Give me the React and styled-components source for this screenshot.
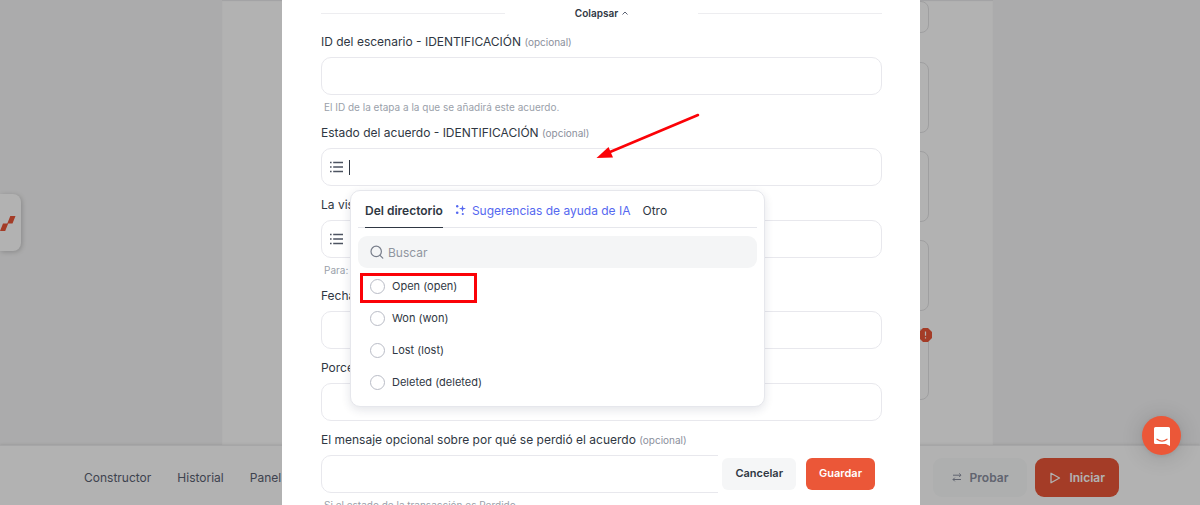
import { useState } from "react";
import styled, { createGlobalStyle, css } from "styled-components";

const GlobalStyle = createGlobalStyle`
  * {
    box-sizing: border-box;
  }

  body {
    margin: 0;
    overflow: hidden;
    font-family: Inter, "Liberation Sans", sans-serif;
    color: #2f3743;
  }

  button, input {
    font-family: inherit;
  }
`;

const Page = styled.div`
  display: flex;
  flex-direction: column;
  height: 100vh;
`;

const Canvas = styled.main`
  flex: 1;
  min-height: 0;
  display: grid;
  grid-template-columns: 21px 1fr;
  padding-right: 6px;
  overflow: hidden;
  background: #f5f5f6;
`;

const SideTab = styled.button`
  align-self: center;
  height: 57px;
  padding: 0;
  border: none;
  border-radius: 0 8px 8px 0;
  background: #fff;
  box-shadow: 1px 1px 5px rgba(0, 0, 0, .2);

  svg {
    display: block;
  }
`;

const Sheet = styled.section`
  justify-self: center;
  width: 100%;
  max-width: 771px;
  height: 100%;
  padding: 1px 64px 0;
  background: #fff;
  box-shadow: inset 0 1px 1px #e8e8ea;
`;

const Card = styled.div`
  position: relative;
  height: ${(props) => (props.$short ? "32px" : "71px")};
  margin-bottom: ${(props) => (props.$short ? "29px" : "18px")};
  border: 1px solid #e4e4e6;
  border-radius: 8px;
`;

const Alert = styled.svg`
  position: absolute;
  top: -2px;
  right: -4px;
`;

const BottomBar = styled.footer`
  height: 60px;
  display: flex;
  align-items: center;
  justify-content: space-between;
  padding: 4px 81px 0 84px;
  background: #fff;
  border-top: 1px solid #eeeef0;
  box-shadow: 0 0 3px rgba(0, 0, 0, .15);
`;

const Nav = styled.nav`
  display: flex;
  gap: 26px;

  a {
    color: #5a6172;
    font-size: 12px;
    line-height: 16px;
    text-decoration: none;
  }
`;

const Actions = styled.div`
  display: flex;
  gap: 8px;
`;

const BarButton = styled.button`
  display: flex;
  align-items: center;
  justify-content: center;
  gap: 8px;
  height: 39px;
  padding: 0 ${(props) => (props.$primary ? "14px" : "19px")};
  border: none;
  border-radius: 9px;
  font-size: 12px;
  font-weight: 600;
  background: ${(props) => (props.$primary ? "#eb5738" : "#f9fbfb")};
  color: ${(props) => (props.$primary ? "#fff" : "#8b90a0")};
`;

const Overlay = styled.div`
  position: fixed;
  inset: 0;
  display: flex;
  justify-content: center;
  background: rgba(0, 0, 0, .3);
`;

const Modal = styled.div`
  position: relative;
  width: 100%;
  max-width: 638px;
  padding: 5px 38px 0 39px;
  margin-left: 2px;
  overflow: hidden;
  background: #fff;
`;

const Collapse = styled.div`
  display: grid;
  grid-template-columns: 1fr auto 1fr;
  align-items: center;
  gap: 70px;
  margin-bottom: 13px;

  hr {
    width: 100%;
    margin: 0;
    border: none;
    border-top: 1px solid #ededf0;
  }

  button {
    display: flex;
    align-items: center;
    gap: 4px;
    padding: 0;
    border: none;
    background: none;
    color: #2f3743;
    font-size: 10px;
    font-weight: 600;
    line-height: 16px;
  }
`;

const Field = styled.div`
  position: relative;
  margin-bottom: 11px;
`;

const Label = styled.label`
  display: block;
  margin-bottom: 7px;
  font-size: 12px;
  line-height: 16px;
  white-space: nowrap;

  small {
    color: #8b909c;
    font-size: 10px;
    line-height: 12px;
  }
`;

const InputBox = styled.div`
  display: flex;
  align-items: center;
  height: 38px;
  padding: 0 8px;
  border: 1px solid #e8e8ed;
  border-radius: 10px;

  input {
    flex: 1;
    min-width: 0;
    border: none;
    outline: none;
    background: none;
    font-size: 12px;
  }
`;

const Caret = styled.span`
  width: 1px;
  height: 15px;
  margin-left: 6px;
  background: #2f3743;
`;

const Hint = styled.p`
  margin: 5px 0 0 3px;
  color: #9a9faa;
  font-size: 10px;
  line-height: 14px;
`;

const Arrow = styled.svg`
  position: absolute;
  top: -12px;
  left: 274px;
  z-index: 3;
`;

const Popover = styled.div`
  position: absolute;
  z-index: 2;
  top: 65px;
  left: 29px;
  width: 415px;
  padding: 0 7px 8px;
  border: 1px solid #e6e7ec;
  border-radius: 10px;
  background: #fff;
  box-shadow: 0 3px 10px rgba(30, 40, 70, .12);
`;

const Tabs = styled.div`
  display: flex;
  gap: 12px;
  padding-left: 7px;
  border-bottom: 1px solid #e6e7ec;
`;

const Tab = styled.button`
  display: flex;
  align-items: center;
  gap: 5px;
  height: 37px;
  margin-bottom: -1px;
  padding: 2px 0 0;
  border: none;
  border-bottom: 1px solid transparent;
  background: none;
  color: ${(props) => (props.$ai ? "#5568f0" : "#2f3743")};
  font-size: 12px;
  white-space: nowrap;

  ${(props) => props.$active && css`
    border-bottom-color: #2f3743;
    font-weight: 600;
  `}
`;

const Search = styled.div`
  display: flex;
  align-items: center;
  gap: 4px;
  height: 32px;
  margin: 8px 0 2px;
  padding: 0 12px;
  border-radius: 9px;
  background: #f4f5f6;

  input {
    flex: 1;
    min-width: 0;
    padding: 0;
    border: none;
    outline: none;
    background: none;
    font-size: 12px;
  }

  input::placeholder {
    color: #9095a0;
  }
`;

const Option = styled.label`
  position: relative;
  display: flex;
  align-items: center;
  gap: 7px;
  height: 32px;
  padding-left: 12px;
  font-size: 11px;

  input {
    appearance: none;
    width: 15px;
    height: 15px;
    margin: 0;
    border: 1px solid #b9bcc6;
    border-radius: 50%;
    background: #fff;
  }
`;

const Highlight = styled.span`
  position: absolute;
  top: 3px;
  left: 2px;
  width: 117px;
  height: 30px;
  border: 3px solid #fb0207;
`;

const ModalFooter = styled.div`
  position: absolute;
  z-index: 3;
  right: 0;
  bottom: 10px;
  display: flex;
  gap: 10px;
  padding: 5px 45px 5px 4px;
  background: #fff;
`;

const ModalButton = styled.button`
  height: 32px;
  padding: 0 13px 2px;
  border: none;
  border-radius: 6px;
  font-size: 11px;
  font-weight: 600;
  background: ${(props) => (props.$primary ? "#eb5738" : "#f5f6f7")};
  color: ${(props) => (props.$primary ? "#fff" : "#2f3743")};
`;

const ChatButton = styled.button`
  position: fixed;
  right: 19px;
  bottom: 50px;
  display: flex;
  align-items: center;
  justify-content: center;
  width: 39px;
  height: 39px;
  padding: 0;
  border: none;
  border-radius: 50%;
  background: #eb5738;
  box-shadow: 0 1px 5px rgba(0, 0, 0, .08), 0 2px 22px rgba(0, 0, 0, .16);
`;

const ListIcon = () => (
  <svg width="13" height="12" viewBox="0 0 13 12" stroke="#4c5361" strokeWidth="1.5" aria-hidden="true">
    <path d="M0 1.5h1.6M0 6h1.6M0 10.5h1.6M3.2 1.5H13M3.2 6H13M3.2 10.5H13" />
  </svg>
);

const SparkIcon = () => (
  <svg width="12" height="12" viewBox="0 0 12 12" fill="#5568f0" aria-hidden="true">
    <path d="M7.5 1 8.2 3.800 11 4.600 8.200 5.400 7.500 8.200 6.800 5.400 4 4.600 6.800 3.800z" />
    <circle cx="2.2" cy="2.2" r="1.2" />
    <circle cx="2.2" cy="8.8" r="1.3" />
    <circle cx="7.8" cy="10" r="1.1" />
  </svg>
);

const options = ["open", "won", "lost", "deleted"];

function DirectoryPopover() {
  const [status, setStatus] = useState("");

  return (
    <Popover>
      <Tabs role="tablist">
        <Tab type="button" role="tab" aria-selected="true" $active>Del directorio</Tab>
        <Tab type="button" role="tab" aria-selected="false" $ai><SparkIcon /> Sugerencias de ayuda de IA</Tab>
        <Tab type="button" role="tab" aria-selected="false">Otro</Tab>
      </Tabs>
      <Search>
        <svg width="14" height="14" viewBox="0 0 14 14" fill="none" stroke="#777d8a" strokeWidth="1.2" strokeLinecap="round" aria-hidden="true">
          <circle cx="6.2" cy="6.4" r="5.2" />
          <path d="m10 10.3 2.8 2.8" />
        </svg>
        <input type="text" placeholder="Buscar" aria-label="Buscar" />
      </Search>
      {options.map((name) => (
        <Option key={name}>
          <input
            type="radio"
            name="status"
            value={name}
            checked={status === name}
            onChange={(e) => setStatus(e.target.value)}
          />
          {name[0].toUpperCase() + name.slice(1)} ({name})
          {name === "open" && <Highlight />}
        </Option>
      ))}
    </Popover>
  );
}

function FormField({ id, label, optional, hint, list, focused, children }) {
  return (
    <Field>
      <Label htmlFor={id}>{label} {optional && <small>(opcional)</small>}</Label>
      <InputBox>
        {list && <ListIcon />}
        {focused && <Caret />}
        <input type="text" id={id} />
      </InputBox>
      {hint && <Hint>{hint}</Hint>}
      {children}
    </Field>
  );
}

export default function App() {
  return (
    <>
      <GlobalStyle />
      <Page>
        <Canvas>
          <SideTab type="button" aria-label="Abrir panel">
            <svg width="21" height="16" viewBox="0 0 21 16" fill="#eb5738" aria-hidden="true">
              <path d="M10.3 1h5.2l-3 7.5H7.3zM3 8.5h5.2L5.2 16H0z" />
            </svg>
          </SideTab>
          <Sheet>
            <Card $short />
            <Card />
            <Card />
            <Card />
            <Card>
              <Alert width="13" height="14" viewBox="0 0 13 14" aria-hidden="true">
                <path d="M4 0h5l4 4v6l-4 4H4l-4-4V4z" fill="#eb5738" />
                <path d="M6.5 3.5v4.3M6.5 9.2v1.2" stroke="#fff" strokeWidth="1.2" />
              </Alert>
            </Card>
          </Sheet>
        </Canvas>
        <BottomBar>
          <Nav>
            <a href="#constructor">Constructor</a>
            <a href="#historial">Historial</a>
            <a href="#panel">Panel</a>
          </Nav>
          <Actions>
            <BarButton type="button">
              <svg width="10" height="9" viewBox="0 0 10 9" fill="none" stroke="#8b90a0" aria-hidden="true">
                <path d="M1 2.2h8M7.2.4 9 2.2 7.2 4M9 6.5H1M2.8 4.7 1 6.5l1.8 1.8" />
              </svg>
              Probar
            </BarButton>
            <BarButton type="button" $primary>
              <svg width="12" height="12" viewBox="0 0 12 12" fill="none" stroke="#fff" strokeWidth="1.3" strokeLinejoin="round" aria-hidden="true">
                <path d="M2 1.2v9.6L10.5 6z" />
              </svg>
              Iniciar
            </BarButton>
          </Actions>
        </BottomBar>
      </Page>

      <Overlay>
        <Modal role="dialog" aria-label="Acuerdo">
          <Collapse>
            <hr />
            <button type="button">
              Colapsar
              <svg width="6" height="4" viewBox="0 0 6 4" fill="none" stroke="#5a6172" aria-hidden="true">
                <path d="M.5 3.5 3 1l2.5 2.5" />
              </svg>
            </button>
            <hr />
          </Collapse>

          <FormField
            id="stage"
            label="ID del escenario - IDENTIFICACIÓN"
            optional
            hint="El ID de la etapa a la que se añadirá este acuerdo."
          />
          <FormField id="deal-status" label="Estado del acuerdo - IDENTIFICACIÓN" optional list focused>
            <Arrow width="105" height="48" viewBox="0 0 105 48" fill="#fb0207" aria-hidden="true">
              <path d="M103 2 15 39" stroke="#fb0207" strokeWidth="2.5" strokeLinecap="round" />
              <path d="M1.500 45 13.500 34 18 44.500z" />
            </Arrow>
            <DirectoryPopover />
          </FormField>
          <FormField id="visibility" label="La visibilidad" list hint="Para:" />
          <FormField id="close-date" label="Fecha" />
          <FormField id="probability" label="Porcentaje" />
          <FormField
            id="lost-reason"
            label="El mensaje opcional sobre por qué se perdió el acuerdo"
            optional
            hint="Si el estado de la transacción es Perdido."
          />

          <ModalFooter>
            <ModalButton type="button">Cancelar</ModalButton>
            <ModalButton type="button" $primary>Guardar</ModalButton>
          </ModalFooter>
        </Modal>
      </Overlay>

      <ChatButton type="button" aria-label="Chat">
        <svg width="18" height="20" viewBox="0 0 18 20" aria-hidden="true">
          <path d="M2.500 1h13a1.500 1.500 0 0 1 1.500 1.500v17.500l-4-2H2.500a1.500 1.500 0 0 1-1.500-1.500v-14a1.500 1.500 0 0 1 1.500-1.500z" fill="#fff" />
          <path d="M4 13.200c3 2.200 7 2.200 10 0" fill="none" stroke="#eb5738" strokeWidth="1.200" strokeLinecap="round" />
        </svg>
      </ChatButton>
    </>
  );
}
